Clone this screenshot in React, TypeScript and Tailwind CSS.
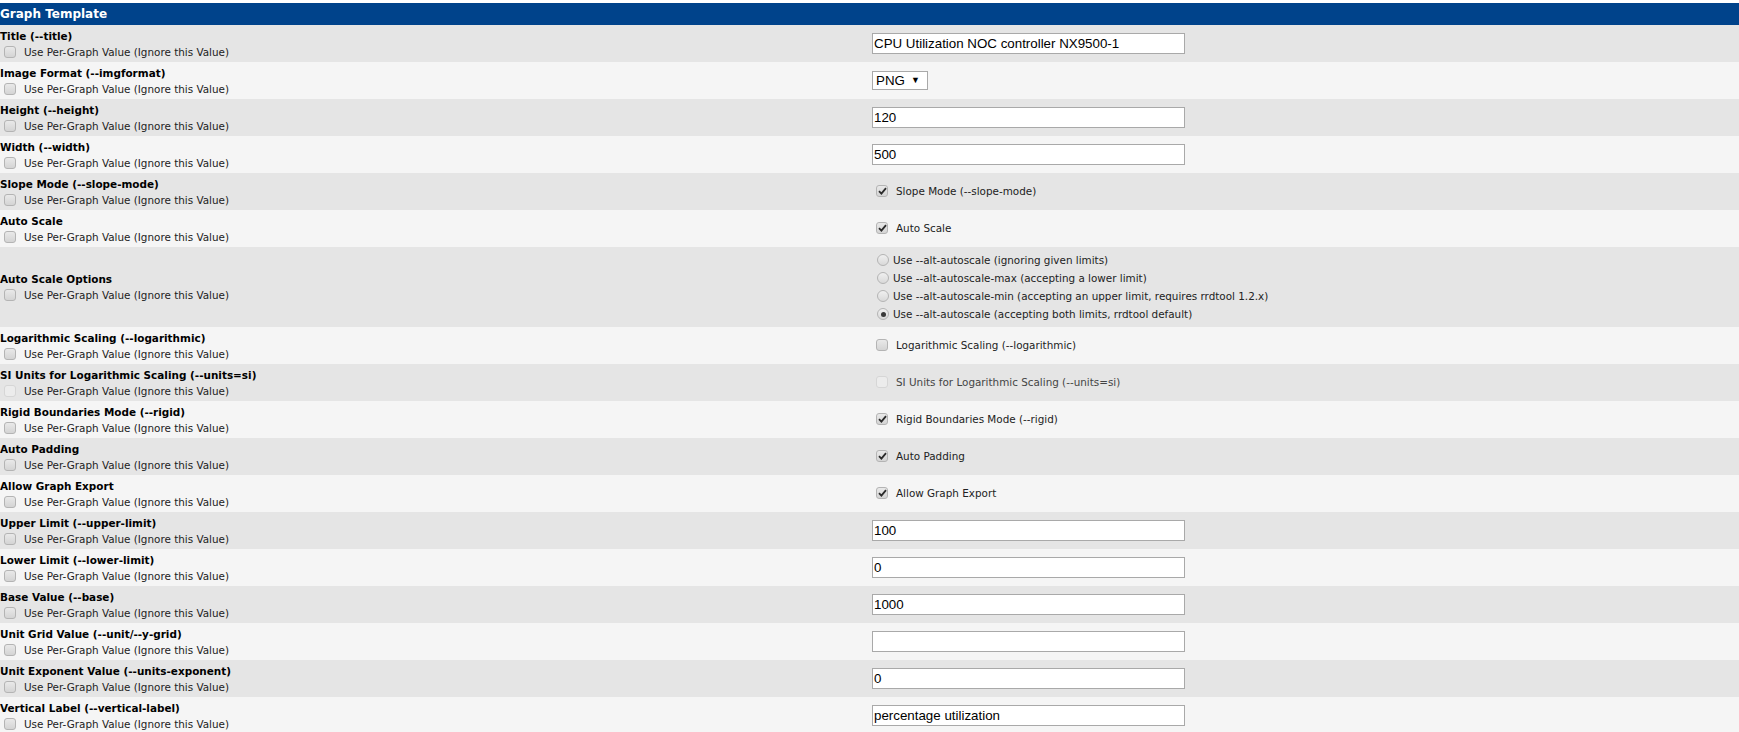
import React from "react";

type Row =
  | { label: string; kind: "text"; value: string }
  | { label: string; kind: "select"; value: string }
  | { label: string; kind: "check"; text: string; checked: boolean; disabled?: boolean }
  | { label: string; kind: "radio" };

const rows: Row[] = [
  { label: "Title (--title)", kind: "text", value: "CPU Utilization NOC controller NX9500-1" },
  { label: "Image Format (--imgformat)", kind: "select", value: "PNG" },
  { label: "Height (--height)", kind: "text", value: "120" },
  { label: "Width (--width)", kind: "text", value: "500" },
  { label: "Slope Mode (--slope-mode)", kind: "check", text: "Slope Mode (--slope-mode)", checked: true },
  { label: "Auto Scale", kind: "check", text: "Auto Scale", checked: true },
  { label: "Auto Scale Options", kind: "radio" },
  { label: "Logarithmic Scaling (--logarithmic)", kind: "check", text: "Logarithmic Scaling (--logarithmic)", checked: false },
  { label: "SI Units for Logarithmic Scaling (--units=si)", kind: "check", text: "SI Units for Logarithmic Scaling (--units=si)", checked: false, disabled: true },
  { label: "Rigid Boundaries Mode (--rigid)", kind: "check", text: "Rigid Boundaries Mode (--rigid)", checked: true },
  { label: "Auto Padding", kind: "check", text: "Auto Padding", checked: true },
  { label: "Allow Graph Export", kind: "check", text: "Allow Graph Export", checked: true },
  { label: "Upper Limit (--upper-limit)", kind: "text", value: "100" },
  { label: "Lower Limit (--lower-limit)", kind: "text", value: "0" },
  { label: "Base Value (--base)", kind: "text", value: "1000" },
  { label: "Unit Grid Value (--unit/--y-grid)", kind: "text", value: "" },
  { label: "Unit Exponent Value (--units-exponent)", kind: "text", value: "0" },
  { label: "Vertical Label (--vertical-label)", kind: "text", value: "percentage utilization" },
];

const radios = [
  "Use --alt-autoscale (ignoring given limits)",
  "Use --alt-autoscale-max (accepting a lower limit)",
  "Use --alt-autoscale-min (accepting an upper limit, requires rrdtool 1.2.x)",
  "Use --alt-autoscale (accepting both limits, rrdtool default)",
];

function Box({ checked, disabled }: { checked?: boolean; disabled?: boolean }) {
  return (
    <span
      className={`inline-flex h-[12px] w-[12px] shrink-0 items-center justify-center rounded-[3px] border ${
        disabled ? "border-[#d6d6d6] bg-[#ececec]" : "border-[#b4b4b4] bg-gradient-to-b from-[#e9e9e9] to-[#d4d4d4]"
      }`}
    >
      {checked && (
        <svg width="9" height="8" viewBox="0 0 9 8">
          <path d="M1 4.2 L3.4 6.6 L8 1.2" fill="none" stroke="#2b2b2b" strokeWidth="1.8" />
        </svg>
      )}
    </span>
  );
}

function Radio({ checked }: { checked?: boolean }) {
  return (
    <span className="inline-flex h-[12px] w-[12px] shrink-0 items-center justify-center rounded-full border border-[#b4b4b4] bg-gradient-to-b from-[#f0f0f0] to-[#d9d9d9]">
      {checked && <span className="h-[5px] w-[5px] rounded-full bg-[#3a3a3a]" />}
    </span>
  );
}

function Field({ row }: { row: Row }) {
  if (row.kind === "text") {
    return (
      <input
        type="text"
        defaultValue={row.value}
        className="h-[21px] w-[313px] border border-[#a9a9a9] bg-white px-[1px] font-['Liberation_Sans',Arial,sans-serif] text-[13.333px] text-black outline-none"
      />
    );
  }
  if (row.kind === "select") {
    return (
      <div className="flex h-[19px] w-[56px] items-center justify-between border border-[#a9a9a9] bg-white pl-[3px] pr-[7px] font-['Liberation_Sans',Arial,sans-serif] text-[13.333px] text-black">
        <span>{row.value}</span>
        <span className="text-[9px]">▼</span>
      </div>
    );
  }
  if (row.kind === "check") {
    return (
      <label className={`flex items-center gap-[8px] pl-[4px] ${row.disabled ? "text-[#444]" : "text-[#222]"}`}>
        <Box checked={row.checked} disabled={row.disabled} />
        <span>{row.text}</span>
      </label>
    );
  }
  return (
    <div className="flex flex-col gap-[5px] pl-[5px]">
      {radios.map((r, i) => (
        <label key={r} className="flex items-center gap-[4px] text-[#222]">
          <Radio checked={i === 3} />
          <span className="leading-[13px]">{r}</span>
        </label>
      ))}
    </div>
  );
}

export default function App() {
  return (
    <div className="min-h-screen bg-white pt-[3px] font-['DejaVu_Sans',Verdana,sans-serif] text-[10.4px]">
      <div className="flex h-[22px] items-center bg-[#00438b] text-[12px] font-bold text-white">
        Graph Template
      </div>
      {rows.map((row, i) => (
        <div
          key={row.label}
          className={`grid grid-cols-[872px_1fr] ${row.kind === "radio" ? "h-[80px]" : "h-[37px]"} ${
            i % 2 === 0 ? "bg-[#e5e5e5]" : "bg-[#f5f5f5]"
          }`}
        >
          <div className="flex flex-col justify-center">
            <div className="text-[10.45px] font-bold leading-[14px] text-black">{row.label}</div>
            <label className="mt-[2px] flex items-center gap-[8px] pl-[4px] text-[#222]">
              <Box disabled={row.kind === "check" && row.disabled} />
              <span className="leading-[14px]">Use Per-Graph Value (Ignore this Value)</span>
            </label>
          </div>
          <div className="flex items-center">
            <Field row={row} />
          </div>
        </div>
      ))}
    </div>
  );
}
